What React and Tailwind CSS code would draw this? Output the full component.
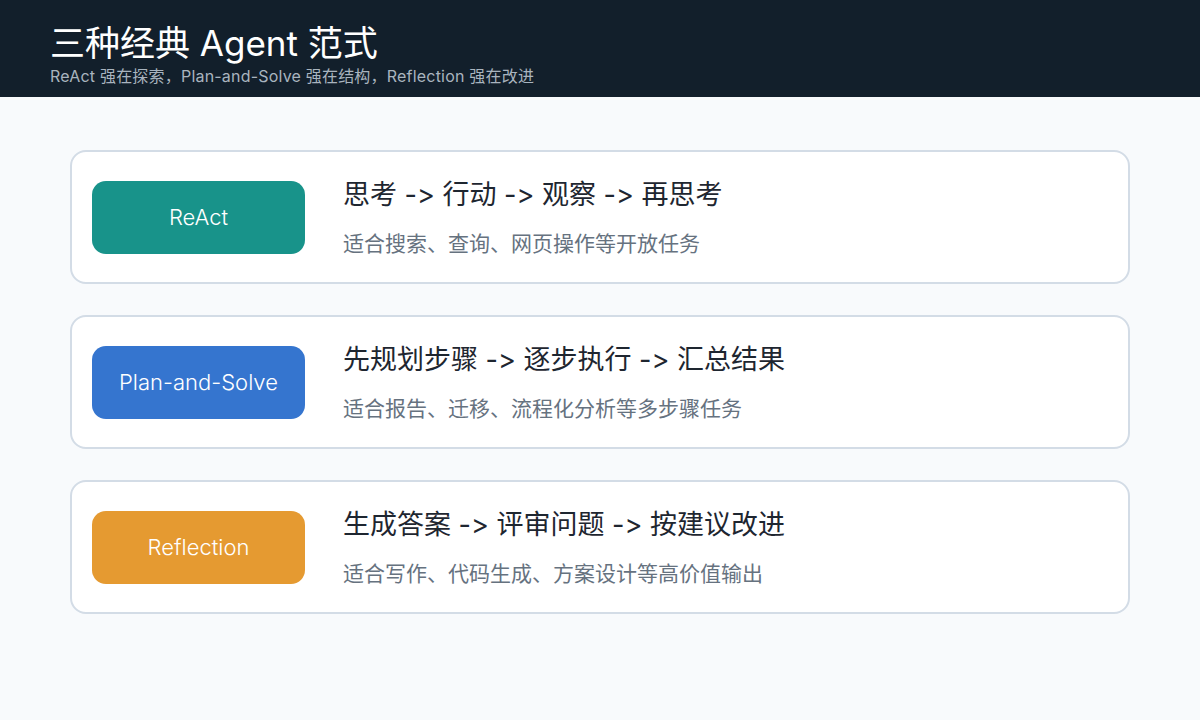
import React from "react";

const modes = [
  {
    name: "ReAct",
    color: "bg-[#18938a]",
    flow: "思考 -> 行动 -> 观察 -> 再思考",
    fit: "适合搜索、查询、网页操作等开放任务",
  },
  {
    name: "Plan-and-Solve",
    color: "bg-[#3575cf]",
    flow: "先规划步骤 -> 逐步执行 -> 汇总结果",
    fit: "适合报告、迁移、流程化分析等多步骤任务",
  },
  {
    name: "Reflection",
    color: "bg-[#e59a31]",
    flow: "生成答案 -> 评审问题 -> 按建议改进",
    fit: "适合写作、代码生成、方案设计等高价值输出",
  },
];

const ModeCard = ({ mode }) => (
  <div className="flex h-[134px] items-center rounded-2xl border-2 border-[#d3dce6] bg-white pl-[20px]">
    <div
      className={`flex h-[73px] w-[213px] shrink-0 items-center justify-center rounded-[14px] ${mode.color} text-[22px] font-light text-white`}
    >
      {mode.name}
    </div>
    <div className="ml-[38px] flex flex-col">
      <div className="text-[27px] leading-[34px] text-[#1e2630]">{mode.flow}</div>
      <div className="mt-[19px] text-[21px] leading-[26px] text-[#66727f]">{mode.fit}</div>
    </div>
  </div>
);

export default function App() {
  return (
    <div
      className="flex h-[720px] w-[1200px] flex-col bg-[#f8fafc] [font-feature-settings:'calt'_0,'liga'_0]"
      style={{ fontFamily: 'Inter, "Noto Sans CJK SC", sans-serif' }}
    >
      <header className="flex h-[97px] flex-col bg-[#121f2b] pl-[50px] pt-[23px]">
        <h1 className="text-[35px] leading-[40px] text-white">三种经典 Agent 范式</h1>
        <p className="mt-[3px] text-[16px] leading-[20px] tracking-[0.2px] text-[#a9b4bf]">
          ReAct 强在探索，Plan-and-Solve 强在结构，Reflection 强在改进
        </p>
      </header>
      <main className="flex flex-col gap-[31px] px-[70px] pt-[53px]">
        {modes.map((m) => (
          <ModeCard key={m.name} mode={m} />
        ))}
      </main>
    </div>
  );
}
